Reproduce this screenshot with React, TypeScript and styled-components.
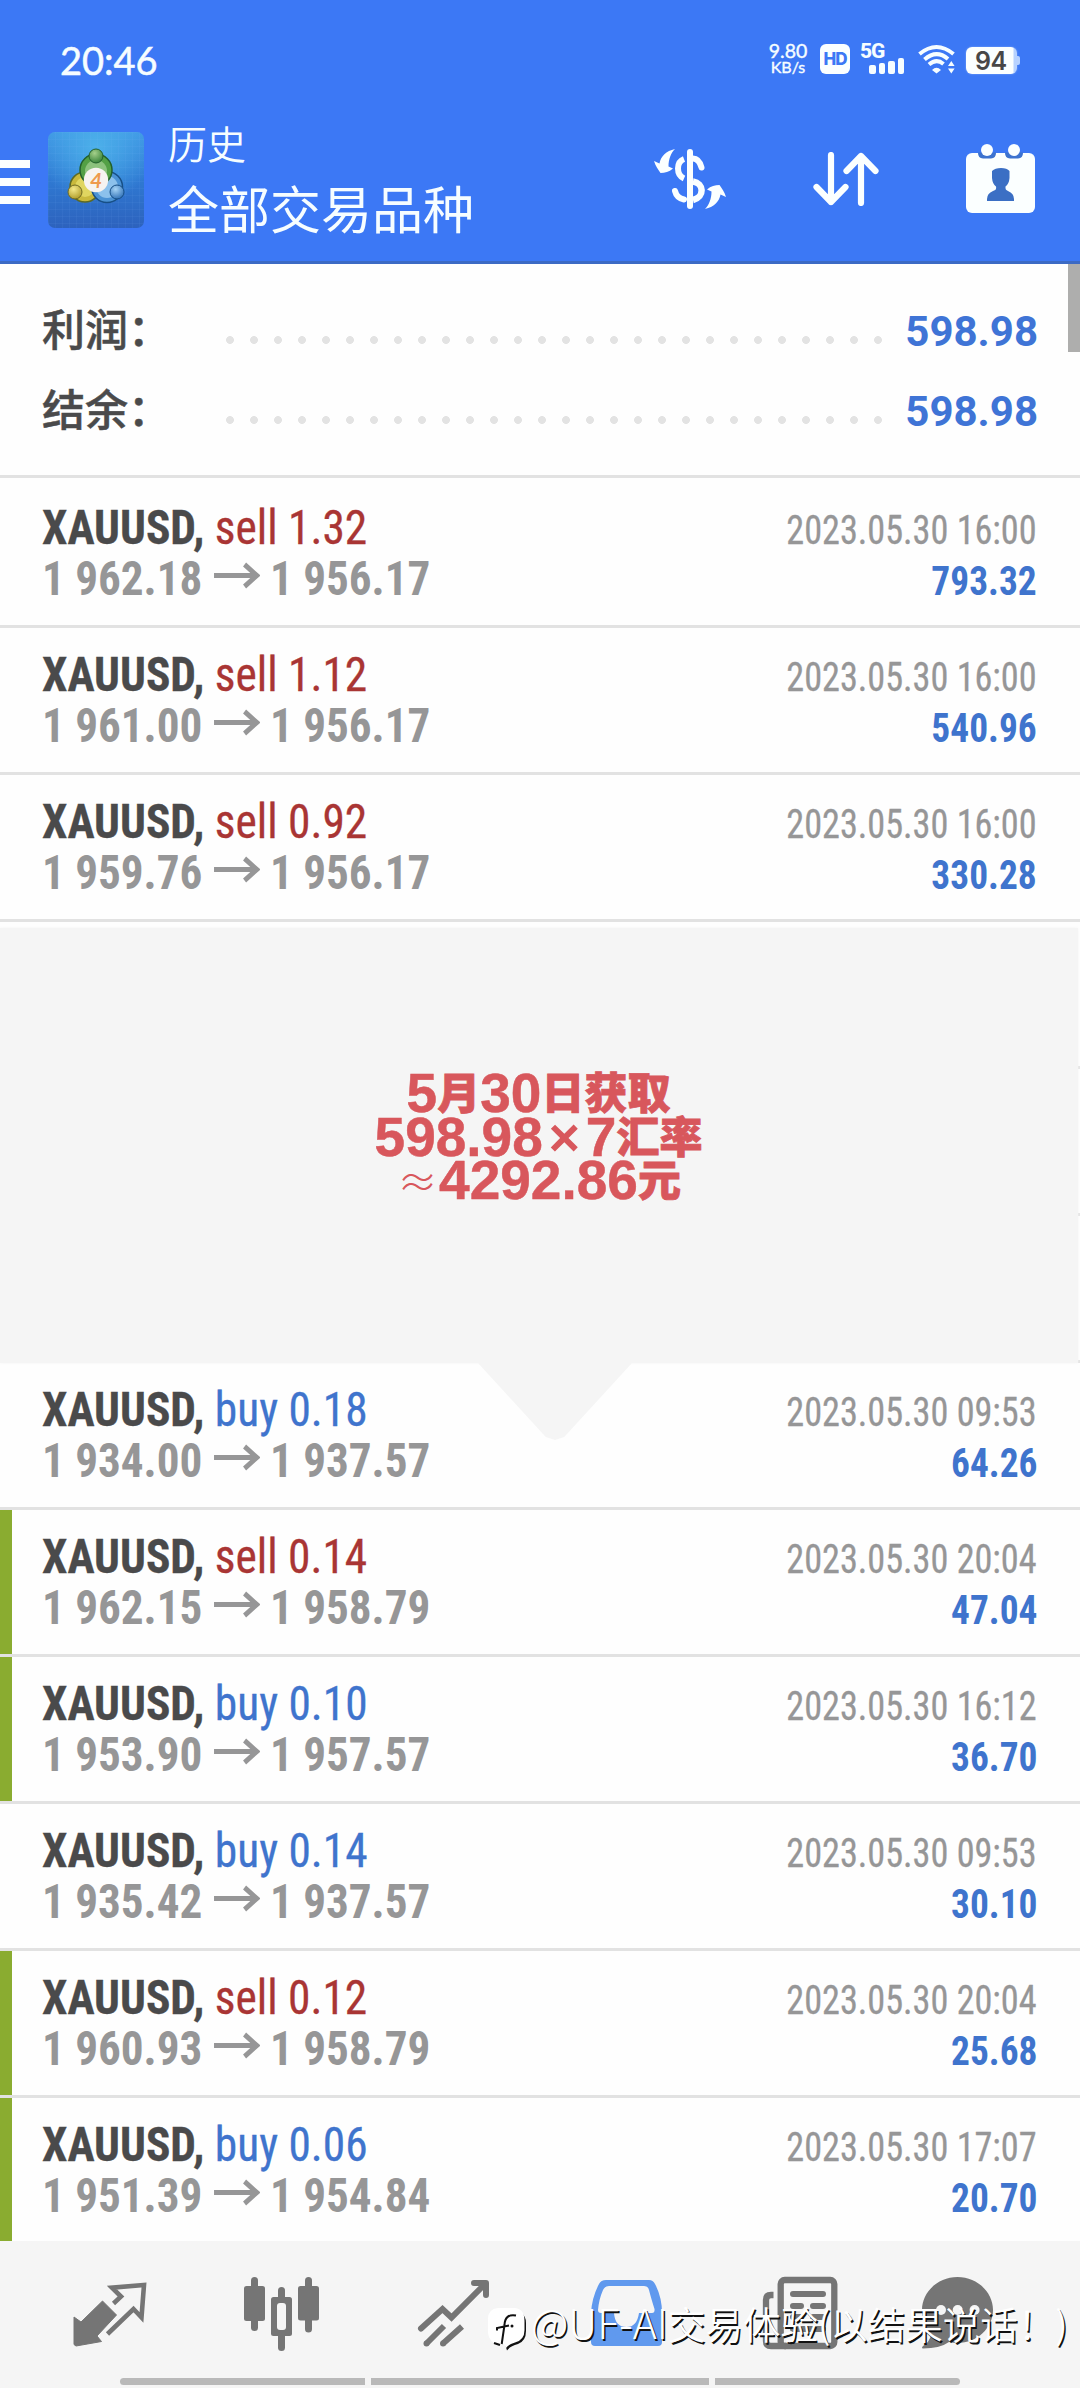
import React from 'react';
import styled, { createGlobalStyle } from 'styled-components';

const cjk = '"Noto Sans CJK SC", sans-serif';
const condensed = '"Roboto Condensed", Roboto, "Noto Sans CJK SC", sans-serif';

const color = {
  brand: '#3c78f5',
  page: '#fefefe',
  line: '#e2e2e2',
  dark: '#4a4a4b',
  grey: '#969697',
  sell: '#a93534',
  buy: '#3f74cd',
  flag: '#8aac30',
  panel: '#f5f5f5',
  icon: '#757575',
};

const GlobalStyle = createGlobalStyle`
  body {
    margin: 0;
    background: ${color.page};
    -webkit-font-smoothing: antialiased;
  }
  svg { display: block; }
`;

const Screen = styled.div`
  position: relative;
  width: 1080px;
  height: 2388px;
  overflow: hidden;
  display: flex;
  flex-direction: column;
  background: ${color.page};
`;

/* ---------- header ---------- */

const Header = styled.header`
  box-sizing: border-box;
  height: 264px;
  flex: none;
  background: ${color.brand};
  border-bottom: 3px solid #3c6ac4;
  color: #f6fdff;
`;

const StatusBar = styled.div`
  box-sizing: border-box;
  height: 118px;
  padding: 44px 60px 0 60px;
  display: flex;
  align-items: flex-start;
  justify-content: space-between;
`;

const Clock = styled.div`
  font: 400 38px/34px Lato, sans-serif;
  margin-top: -1px;
  -webkit-text-stroke: 0.5px #f6fdff;
`;

const StatusIcons = styled.div`
  display: flex;
  height: 30px;
`;

const Speed = styled.div`
  width: 40px;
  margin-right: 12px;
  display: flex;
  flex-direction: column;
  align-items: center;
  font: 400 19.5px/14px Lato, sans-serif;
  -webkit-text-stroke: 0.4px #f6fdff;
  span + span {
    font-size: 16px;
    line-height: 18px;
  }
`;

const HdBadge = styled.div`
  width: 30px;
  height: 30px;
  margin-right: 10px;
  border-radius: 6px;
  background: #fbffff;
  color: ${color.brand};
  font: 800 17px/30px Inter, sans-serif;
  letter-spacing: -1px;
  text-align: center;
`;

const Signal = styled.div`
  display: flex;
  flex-direction: column;
  width: 46px;
  margin-right: 12px;
  font: 800 21px/15px Roboto, sans-serif;
  letter-spacing: -1px;
`;

const SignalBars = styled.div`
  display: flex;
  align-items: flex-end;
  gap: 3px;
  height: 17px;
  margin: -2px 0 0 9px;
`;

const SignalBar = styled.i<{ h: number }>`
  width: 6.5px;
  height: ${p => p.h}px;
  border-radius: 2px;
  background: #f6fdff;
`;

const Battery = styled.div`
  width: 51px;
  height: 27px;
  margin: 3px 3px 0 11px;
  border-radius: 6px;
  background: linear-gradient(90deg, #fbffff 47px, #b7d2ff 48px);
  box-shadow: 0 0 2px #ffffff66;
  position: relative;
  color: #474747;
  font: 600 25px/28px Inter, sans-serif;
  text-indent: 9px;
  letter-spacing: -0.5px;
  &::after {
    content: '';
    position: absolute;
    left: 51px;
    top: 9px;
    width: 3px;
    height: 9px;
    border-radius: 0 2px 2px 0;
    background: #b7d2ff;
  }
`;

const AppBar = styled.div`
  display: flex;
  align-items: flex-start;
  height: 143px;
  padding-right: 45px;
`;

const Menu = styled.div`
  width: 30px;
  margin: 42px 18px 0 0;
  display: flex;
  flex-direction: column;
  gap: 10px;
  i {
    height: 8px;
    background: #fbffff;
  }
`;

const Logo = styled.div`
  margin-top: 14px;
`;

const Titles = styled.div`
  flex: 1;
  margin-left: 24px;
  font-family: ${cjk};
  font-weight: 400;
`;

const Caption = styled.div`
  font-size: 39px;
  line-height: 49px;
  font-weight: 350;
`;

const Title = styled.div`
  font-size: 51px;
  line-height: 81px;
`;

const Actions = styled.div`
  display: flex;
  gap: 87px;
  height: 69px;
  margin-top: 26px;
  align-items: center;
`;

/* ---------- summary ---------- */

const Summary = styled.section`
  box-sizing: border-box;
  flex: none;
  height: 214px;
  padding: 23px 42px 0;
  border-bottom: 3px solid ${color.line};
  position: relative;
`;

const ScrollThumb = styled.div`
  position: absolute;
  right: 0;
  top: 0;
  width: 12px;
  height: 88px;
  background: #aeaead;
`;

const SummaryRow = styled.div`
  display: flex;
  align-items: baseline;
  height: 80px;
`;

const SummaryLabel = styled.div`
  width: 176px;
  font: 500 43px/80px ${cjk};
  color: ${color.dark};
  -webkit-text-stroke: 0.5px ${color.dark};
`;

const Dots = styled.div`
  width: 672px;
  height: 10px;
  background: radial-gradient(circle at 12px 4px, #e3e3e3 3.6px, transparent 4.2px) 0 0 / 24px 10px repeat-x;
`;

const SummaryValue = styled.div`
  flex: 1;
  text-align: right;
  font: 700 42px/80px Roboto, sans-serif;
  color: #3f74d6;
`;

/* ---------- deals ---------- */

const Deal = styled.div<{ flagged?: boolean; first?: boolean; last?: boolean }>`
  box-sizing: border-box;
  flex: none;
  height: ${p => (p.first ? 150 : p.last ? 143 : 147)}px;
  padding: ${p => (p.first ? 24 : 21)}px 43px 0 42px;
  border-bottom: ${p => (p.last ? 0 : 3)}px solid ${color.line};
  box-shadow: ${p => (p.flagged ? `inset 12px 0 0 ${color.flag}` : 'none')};
  font-family: ${condensed};
  white-space: pre;
`;

const DealLine = styled.div`
  display: flex;
  align-items: baseline;
  justify-content: space-between;
  height: 51px;
  line-height: 51px;
`;

const Order = styled.div<{ side: string }>`
  font-size: 48px;
  color: ${p => (p.side === 'sell' ? color.sell : color.buy)};
  transform: scaleX(0.945);
  transform-origin: 0 50%;
  -webkit-text-stroke: 0.3px currentColor;
  b {
    font-weight: 700;
    color: ${color.dark};
  }
`;

const Prices = styled.div`
  display: flex;
  align-items: baseline;
  font-size: 48px;
  font-weight: 700;
  color: ${color.grey};
  transform: scaleX(0.94);
  transform-origin: 0 50%;
  svg { margin: 0 11px 0 12px; }
`;

const DateTime = styled.div`
  font-size: 40px;
  color: ${color.grey};
  transform: scaleX(0.905);
  transform-origin: 100% 50%;
  -webkit-text-stroke: 0.3px currentColor;
`;

const Profit = styled.div`
  font-size: 40px;
  font-weight: 700;
  color: ${color.buy};
  transform: scaleX(0.935);
  transform-origin: 100% 50%;
`;

/* ---------- note ---------- */

const Note = styled.div`
  flex: none;
  box-sizing: border-box;
  height: 441px;
  padding: 6px 2px 0 0;
  position: relative;
  background: repeating-linear-gradient(${color.page} 0 144px, ${color.line} 144px 147px);
`;

const NoteBody = styled.div`
  box-sizing: border-box;
  height: 435px;
  padding: 141px 1px 0 0;
  background: ${color.panel};
  box-shadow: 0 0 3px ${color.panel};
  color: #d8575c;
  font: 900 43px/43.5px ${cjk};
  text-align: center;
`;

const NoteLine = styled.div`
  height: 43.5px;
  white-space: nowrap;
  -webkit-text-stroke: 0.8px #d8575c;
  b {
    font: 700 55px/43.5px "Liberation Sans", Arial, sans-serif;
    vertical-align: -3px;
    -webkit-text-stroke: 0.5px #d8575c;
  }
`;

const Sign = styled.span<{ thin?: boolean }>`
  display: inline-block;
  width: 43px;
  text-align: center;
  vertical-align: ${p => (p.thin ? -1 : -3)}px;
  -webkit-text-stroke: 0;
  font: ${p => (p.thin ? `300 40px/43.5px ${cjk}` : '700 54px/43.5px "Liberation Sans", Arial, sans-serif')};
`;

const NotePointer = styled.div`
  position: absolute;
  left: 478px;
  top: 441px;
  width: 154px;
  height: 77px;
  background: ${color.panel};
  clip-path: polygon(0 0, 100% 0, 56% 96%, 50% 100%, 44% 96%);
`;

/* ---------- bottom navigation ---------- */

const NavBar = styled.nav`
  flex: none;
  box-sizing: border-box;
  height: 147px;
  padding-top: 34px;
  background: ${color.panel};
  display: flex;
  flex-direction: column;
  justify-content: space-between;
`;

const Tabs = styled.div`
  display: grid;
  grid-template-columns: 172px 172px 172px 174px 172px 144px;
  padding-left: 24px;
  justify-items: center;
  color: ${color.icon};
`;

const Handles = styled.div`
  display: flex;
  gap: 6px;
  margin: 0 120px 3px;
  height: 7px;
`;

const Handle = styled.i<{ w: number; r?: string }>`
  width: ${p => p.w}px;
  background: #b9b9b9;
  border-radius: ${p => p.r || 0};
`;

const Watermark = styled.div`
  position: absolute;
  left: 488px;
  top: 2296px;
  display: flex;
  align-items: flex-start;
  color: #fff;
  font: 350 37.5px/50px ${cjk};
  white-space: nowrap;
  text-shadow: 1.5px 1.5px 0 #111;
  svg { margin: 11px 3px 0 0; }
  b {
    font-weight: 300;
    font-size: 41px;
  }
`;

/* ---------- drawings ---------- */

const Wifi = () => (
  <svg width="37" height="30" viewBox="0 0 37 30" fill="none" stroke="#f6fdff" strokeWidth="4">
    <path d="M1.5 10 Q18.500 -4 35.500 10" />
    <path d="M6.500 15.500 Q18.500 5 30 15" />
    <path d="M11 20.500 Q18.500 14 25.500 20" />
    <path d="M14 26 Q18.500 21.500 23 26 L18.500 29.500Z" fill="#f6fdff" stroke="none" />
    <path d="M30 22 L33.300 17 L36.600 22Z M30 24.500 L33.300 29.500 L36.600 24.500Z" fill="#f6fdff" stroke="none" />
  </svg>
);

const AppLogo = () => (
  <svg width="96" height="96" viewBox="0 0 96 96">
    <defs>
      <linearGradient id="tile" x1="0" y1="0" x2="0" y2="1">
        <stop offset="0" stopColor="#3f97e4" />
        <stop offset="0.5" stopColor="#2f79d2" />
        <stop offset="1" stopColor="#2d62bd" />
      </linearGradient>
      <radialGradient id="glow" cx="0.5" cy="0.15" r="0.6">
        <stop offset="0" stopColor="#4cb0ea" />
        <stop offset="1" stopColor="#4cb0ea" stopOpacity="0" />
      </radialGradient>
      <pattern id="grid" width="7" height="7" patternUnits="userSpaceOnUse">
        <path d="M0 0H7M0 0V7" stroke="#8cc8ff" strokeOpacity="0.12" />
      </pattern>
      <radialGradient id="green" cx="0.4" cy="0.3" r="0.8">
        <stop offset="0" stopColor="#a5d08b" /><stop offset="1" stopColor="#2c7a2f" />
      </radialGradient>
      <radialGradient id="gold" cx="0.4" cy="0.3" r="0.8">
        <stop offset="0" stopColor="#f4e98a" /><stop offset="1" stopColor="#a8941f" />
      </radialGradient>
      <radialGradient id="sky" cx="0.4" cy="0.3" r="0.8">
        <stop offset="0" stopColor="#a6d4f6" /><stop offset="1" stopColor="#2467b0" />
      </radialGradient>
    </defs>
    <rect width="96" height="96" rx="7" fill="url(#tile)" />
    <rect width="96" height="96" rx="7" fill="url(#glow)" />
    <rect width="96" height="96" rx="7" fill="url(#grid)" />
    <circle cx="37" cy="55" r="15" fill="#c9b93c" stroke="#5d6a25" strokeWidth="1.500" />
    <circle cx="37" cy="55" r="10" fill="#e0d660" />
    <circle cx="59" cy="55" r="15.500" fill="#4b92d4" stroke="#174f86" strokeWidth="1.500" />
    <circle cx="59" cy="55" r="11" fill="#8cc1ec" />
    <circle cx="48" cy="38" r="16" fill="#53a045" stroke="#23602c" strokeWidth="1.500" />
    <circle cx="48" cy="39" r="11" fill="#8cc27d" />
    <circle cx="48" cy="24" r="7" fill="url(#green)" stroke="#23602c" />
    <circle cx="27" cy="60" r="7" fill="url(#gold)" stroke="#6f6a22" />
    <circle cx="69" cy="60" r="7" fill="url(#sky)" stroke="#174f86" />
    <circle cx="48" cy="48" r="12.200" fill="#f6f3f0" />
    <text x="48" y="55.500" textAnchor="middle" fontFamily="Lato, sans-serif" fontSize="21" fontWeight="700" fontStyle="italic" fill="#ee9a4d">4</text>
  </svg>
);

const CurvedArrow = 'M21 0 C12 2 7 7 5.500 14.500 L0 12 C1.500 17 4 20.500 6.500 24 C11 24 15 23 19 19.500 L14.500 17.500 C14.500 10 17 4 21 0Z';

const Currency = () => (
  <svg width="72" height="60" viewBox="0 0 72 60" fill="none" stroke="#fbffff" strokeWidth="6">
    <path d="M36 3V57" strokeLinecap="round" />
    <path d="M30 10 C22 13 22 26 30 29.500" />
    <path d="M39 9.500 C43 9.500 46 13 47.500 18.500" strokeLinecap="round" />
    <path d="M39 32.500 C50 34 51 48 39 51" strokeWidth="6.500" />
    <path d="M21 42 C22 46 25 49.500 30 50.500" strokeLinecap="round" />
    <path d={CurvedArrow} fill="#fbffff" stroke="none" />
    <path d={CurvedArrow} fill="#fbffff" stroke="none" transform="rotate(180 36 30)" />
  </svg>
);

const Sort = () => (
  <svg width="66" height="54" viewBox="0 0 66 54" fill="none" stroke="#fbffff" strokeWidth="6.200" strokeLinecap="round" strokeLinejoin="round">
    <path d="M18 3V50 M3.500 35 L18 50 L32.500 35" />
    <path d="M48 51V4 M33.500 19 L48 4 L62.500 19" />
  </svg>
);

const Calendar = () => (
  <svg width="69" height="69" viewBox="0 0 69 69" fill="#fbffff">
    <rect y="9" width="69" height="60" rx="6" />
    <path d="M12 8.500H30V9 Q30 14 25 14.500H17 Q12 14 12 9Z M39 8.500H57V9 Q57 14 52 14.500H44 Q39 14 39 9Z" fill="#3d73cf" />
    <circle cx="21" cy="6" r="6" />
    <circle cx="48" cy="6" r="6" />
    <path d="M26 27 Q29 24 35 24 Q41 24 43.500 27 L43.500 34 Q43 40 39.500 42.500 Q39 46 42 47 Q48 49.500 48 55 V57 H21 V55 Q21 49.500 27 47 Q31 46 30 42.500 Q26.500 40 26 34Z" fill="#3b6fc4" />
  </svg>
);

const PriceArrow = () => (
  <svg width="49" height="33" viewBox="0 0 49 33" fill="none" stroke={color.grey} strokeWidth="5">
    <path d="M0 13.500H45" />
    <path d="M32.500 2.500 L45.500 13.500 L32.500 24.500" />
  </svg>
);

const QuotesIcon = () => (
  <svg width="76" height="76" viewBox="0 0 76 76">
    <path d="M2 42 L9 47 L30.500 26 L44.500 40 L25 61 L29.500 66.500 L4 71 L2 69.500Z" fill="currentColor" stroke="currentColor" strokeWidth="1" strokeLinejoin="round" />
    <path d="M41.500 28.500 L49 21.500 L40 12.700 L72 10 L69.500 42.500 L61.500 34 L35.500 59" fill="none" stroke="currentColor" strokeWidth="4.600" strokeLinejoin="miter" />
  </svg>
);

const CandlesIcon = () => (
  <svg width="76" height="76" viewBox="0 0 76 76" fill="currentColor">
    <rect x="7" y="2" width="7" height="54" rx="3.500" />
    <rect x="0" y="11" width="21" height="35" rx="2.500" />
    <rect x="61" y="2" width="7" height="55.500" rx="3.500" />
    <rect x="54" y="11" width="21" height="34.500" rx="2.500" />
    <rect x="34" y="12" width="7" height="64" rx="3.500" />
    <rect x="27" y="22" width="21" height="39" rx="2.500" />
    <rect x="33" y="28" width="9" height="27" rx="3" fill={color.panel} />
  </svg>
);

const TrendIcon = () => (
  <svg width="76" height="76" viewBox="0 0 76 76" fill="none" stroke="currentColor" strokeWidth="6">
    <path d="M5 53.500 L26.500 34 L35.500 42.500 L69 9" strokeLinecap="round" />
    <path d="M58 8H70V20" strokeLinecap="round" strokeLinejoin="round" />
    <path d="M28 51 L10.500 68.500 M46 51.500 L27 68.500" />
    <circle cx="10.500" cy="68.500" r="3" fill="currentColor" stroke="none" />
    <circle cx="27" cy="68.500" r="3" fill="currentColor" stroke="none" />
  </svg>
);

const InboxIcon = () => (
  <svg width="76" height="76" viewBox="0 0 76 76">
    <path
      fill="#6099ee"
      fillRule="evenodd"
      d="M17 5H60Q64 5 66 9Q73 22 73 38V67Q73 71 69 71H6Q2 71 2 67V38Q3 22 10 9Q12 5 17 5Z
         M20 11Q16 11 14 15Q10 24 9 35Q9 38 12 38H25Q26 52 37.500 52Q48 52 50 38H63Q66 38 65.500 34Q62 23 60 15Q59 11 55 11Z"
    />
  </svg>
);

const NewsIcon = () => (
  <svg width="76" height="76" viewBox="0 0 76 76" fill="none" stroke="currentColor" strokeWidth="6.300">
    <rect x="18.700" y="5" width="53.600" height="66" rx="4" />
    <path d="M11.500 20H9Q4 20 4 25V66Q4 71 9 71H24" />
    <path d="M31 19H61 M31 31H39 M51 31H61 M31 42H39 M51 42H61 M31 54H61" strokeLinecap="round" strokeWidth="6" />
  </svg>
);

const ChatIcon = () => (
  <svg width="76" height="76" viewBox="0 0 76 76" fill="currentColor">
    <path d="M37.500 2C57 2 73 17 73 35C73 53 57 68 37.500 68Q33 68 29 67Q20 73.500 3 73.500Q1 73 3 71Q9 68 11.500 59Q2 50 2 35C2 17 18 2 37.500 2Z" />
    <g fill={color.panel}>
      <circle cx="21" cy="35" r="5" />
      <circle cx="37.700" cy="35" r="5" />
      <circle cx="54.600" cy="35" r="5" />
    </g>
  </svg>
);

const BadgeMark = () => (
  <svg width="40" height="46" viewBox="0 0 40 46">
    <path d="M33 6Q38 9 38 16V24Q38 34 30 37Q22 39 19 43.500L17 37L30 30Z" fill="#111" />
    <path d="M10 1H27Q36.500 2 36.500 14V23Q36.500 33 27 35.500Q20 37.500 18 41L16 37H11Q1 36 0 26V12Q0 2 10 1Z" fill="#fff" />
    <path d="M28 8.500Q17 6.500 16.500 18L13.700 37 M9 23.500V21L21 18.500 M6 36L12 38" fill="none" stroke="#111" strokeWidth="2" />
    <circle cx="24" cy="19" r="1.500" fill="#111" />
  </svg>
);

/* ---------- data ---------- */

type DealData = { side: 'sell' | 'buy'; lots: string; open: string; close: string; time: string; profit: string; flagged?: boolean };

const earlier: DealData[] = [
  { side: 'sell', lots: '1.32', open: '1 962.18', close: '1 956.17', time: '2023.05.30 16:00', profit: '793.32' },
  { side: 'sell', lots: '1.12', open: '1 961.00', close: '1 956.17', time: '2023.05.30 16:00', profit: '540.96' },
  { side: 'sell', lots: '0.92', open: '1 959.76', close: '1 956.17', time: '2023.05.30 16:00', profit: '330.28' },
];

const later: DealData[] = [
  { side: 'buy', lots: '0.18', open: '1 934.00', close: '1 937.57', time: '2023.05.30 09:53', profit: '64.26' },
  { side: 'sell', lots: '0.14', open: '1 962.15', close: '1 958.79', time: '2023.05.30 20:04', profit: '47.04', flagged: true },
  { side: 'buy', lots: '0.10', open: '1 953.90', close: '1 957.57', time: '2023.05.30 16:12', profit: '36.70', flagged: true },
  { side: 'buy', lots: '0.14', open: '1 935.42', close: '1 937.57', time: '2023.05.30 09:53', profit: '30.10' },
  { side: 'sell', lots: '0.12', open: '1 960.93', close: '1 958.79', time: '2023.05.30 20:04', profit: '25.68', flagged: true },
  { side: 'buy', lots: '0.06', open: '1 951.39', close: '1 954.84', time: '2023.05.30 17:07', profit: '20.70', flagged: true },
];

const DealRow = ({ deal, first, last }: { deal: DealData; first?: boolean; last?: boolean }) => (
  <Deal flagged={deal.flagged} first={first} last={last}>
    <DealLine>
      <Order side={deal.side}><b>XAUUSD, </b>{deal.side} {deal.lots}</Order>
      <DateTime>{deal.time}</DateTime>
    </DealLine>
    <DealLine>
      <Prices><span>{deal.open}</span><PriceArrow /><span>{deal.close}</span></Prices>
      <Profit>{deal.profit}</Profit>
    </DealLine>
  </Deal>
);

export default function App() {
  return (
    <Screen>
      <GlobalStyle />
      <Header>
        <StatusBar>
          <Clock>20:46</Clock>
          <StatusIcons>
            <Speed><span>9.80</span><span>KB/s</span></Speed>
            <HdBadge>HD</HdBadge>
            <Signal>
              5G
              <SignalBars>
                {[9, 11, 13.5, 16.5].map(h => <SignalBar key={h} h={h} />)}
              </SignalBars>
            </Signal>
            <Wifi />
            <Battery>94</Battery>
          </StatusIcons>
        </StatusBar>
        <AppBar>
          <Menu><i /><i /><i /></Menu>
          <Logo><AppLogo /></Logo>
          <Titles>
            <Caption>历史</Caption>
            <Title>全部交易品种</Title>
          </Titles>
          <Actions>
            <Currency />
            <Sort />
            <Calendar />
          </Actions>
        </AppBar>
      </Header>

      <Summary>
        <SummaryRow>
          <SummaryLabel>利润：</SummaryLabel>
          <Dots />
          <SummaryValue>598.98</SummaryValue>
        </SummaryRow>
        <SummaryRow>
          <SummaryLabel>结余：</SummaryLabel>
          <Dots />
          <SummaryValue>598.98</SummaryValue>
        </SummaryRow>
        <ScrollThumb />
      </Summary>

      {earlier.map((d, i) => <DealRow key={d.profit} deal={d} first={i === 0} />)}

      <Note>
        <NoteBody>
          <NoteLine><b>5</b>月<b>30</b>日获取</NoteLine>
          <NoteLine><b>598.98</b><Sign>×</Sign><b>7</b>汇率</NoteLine>
          <NoteLine><Sign thin>≈</Sign><b>4292.86</b>元</NoteLine>
        </NoteBody>
        <NotePointer />
      </Note>

      {later.map((d, i) => <DealRow key={d.profit} deal={d} last={i === later.length - 1} />)}

      <NavBar>
        <Tabs>
          <QuotesIcon />
          <CandlesIcon />
          <TrendIcon />
          <InboxIcon />
          <NewsIcon />
          <ChatIcon />
        </Tabs>
        <Handles>
          <Handle w={245} r="4px 0 0 4px" />
          <Handle w={338} />
          <Handle w={245} r="0 4px 4px 0" />
        </Handles>
      </NavBar>

      <Watermark>
        <BadgeMark />
        <span><b>@UF-AI</b>交易体验(以结果说话！)</span>
      </Watermark>
    </Screen>
  );
}
